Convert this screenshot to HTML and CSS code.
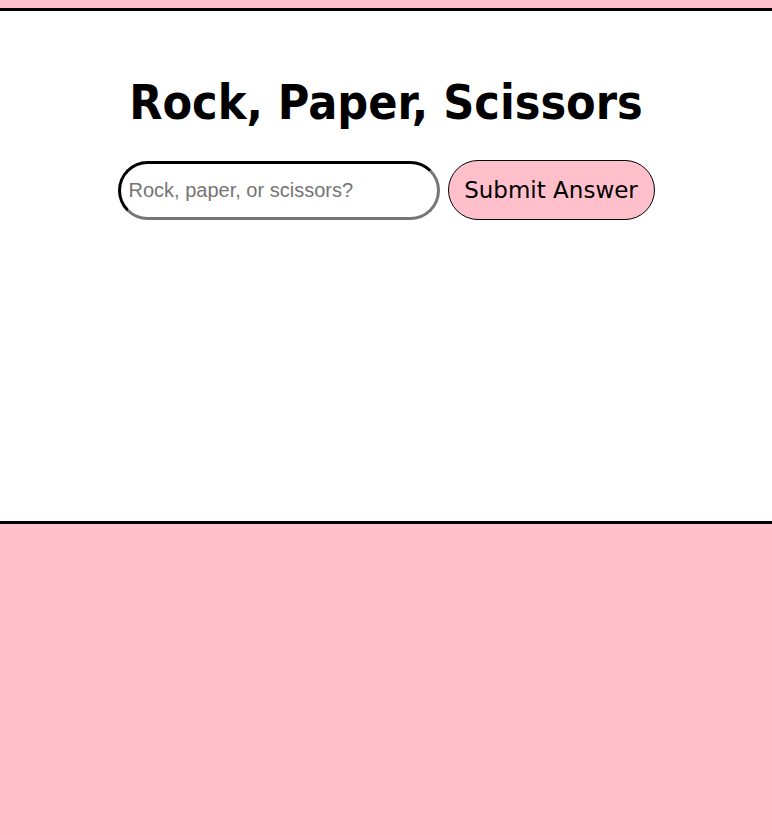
FILE: index.html
```html
<!DOCTYPE html>
<html>
<head>
<meta charset="utf-8">
<link rel="stylesheet" href="styles.css">
</head>
<body>
<main class="game">
  <h1 class="title">Rock, Paper, Scissors</h1>
  <form class="answer-form">
    <input class="answer-input" type="text" placeholder="Rock, paper, or scissors?">
    <button class="submit-btn" type="button">Submit Answer</button>
  </form>
</main>
</body>
</html>
```
FILE: styles.css
```css
html, body {
  background: pink;
}
body {
  margin: 0;
  padding-top: 8px;
  font-family: "DejaVu Sans", sans-serif;
}
.game {
  background: #fff;
  border-top: 3px solid #000;
  border-bottom: 3px solid #000;
  height: 510px;
  box-sizing: content-box;
  display: flex;
  flex-direction: column;
  align-items: center;
}
.title {
  margin: 63px 0 0;
  font-family: "DejaVu Sans Condensed", "DejaVu Sans", sans-serif;
  font-stretch: condensed;
  font-size: 48px;
  font-weight: bold;
  line-height: 56px;
  color: #000;
}
.answer-form {
  margin-top: 30px;
  display: flex;
  align-items: center;
  gap: 8px;
}
.answer-input {
  width: 322px;
  height: 59px;
  box-sizing: border-box;
  border: 3px inset #767676;
  border-top-color: #222;
  border-left-color: #222;
  border-radius: 30px;
  padding: 0 8px;
  font-family: "Liberation Sans", Arial, sans-serif;
  font-size: 20px;
  outline: none;
}
.answer-input::placeholder {
  color: #757575;
}
.submit-btn {
  width: 207px;
  height: 60px;
  box-sizing: border-box;
  background: pink;
  border: 1px solid #000;
  border-radius: 30px;
  font-family: "DejaVu Sans", sans-serif;
  font-size: 23px;
  color: #000;
  padding: 0;
}
```
